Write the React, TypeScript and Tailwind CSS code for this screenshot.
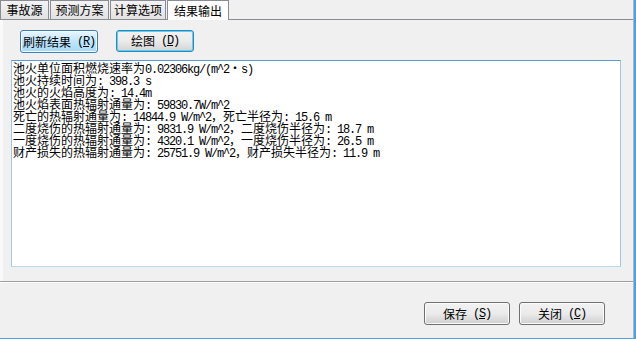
import React from "react";

const cjk = "font-['Noto_Sans_CJK_SC','Noto_Sans_CJK_JP',sans-serif]";
const ascii = "font-['Liberation_Mono','DejaVu_Sans_Mono',monospace] tracking-[-1.2px]";

const resultLines = [
  "池火单位面积燃烧速率为0.02306kg/(m^2·s)",
  "池火持续时间为: 398.3 s",
  "池火的火焰高度为: 14.4m",
  "池火焰表面热辐射通量为: 59830.7W/m^2",
  "死亡的热辐射通量为: 14844.9 W/m^2，死亡半径为: 15.6 m",
  "二度烧伤的热辐射通量为: 9831.9 W/m^2，二度烧伤半径为: 18.7 m",
  "一度烧伤的热辐射通量为: 4320.1 W/m^2，一度烧伤半径为: 26.5 m",
  "财产损失的热辐射通量为: 25751.9 W/m^2，财产损失半径为: 11.9 m",
];

// split a line into half-width and full-width runs (SimSun style: 6px / 12px cells)
function MixedText({ text }: { text: string }) {
  const runs = text.match(/[\x20-\x7e]+|[^\x20-\x7e]+/g) || [];
  return (
    <>
      {runs.map((r, i) =>
        /^[\x20-\x7e]/.test(r) ? (
          <span key={i} className={ascii}>{r}</span>
        ) : (
          <span key={i} className={cjk}>{r}</span>
        )
      )}
    </>
  );
}

function Tab({ label, width, active }: { label: string; width: string; active?: boolean }) {
  return (
    <div
      className={
        active
          ? `${width} h-[20px] bg-white border border-b-0 border-[#898c95] flex items-center justify-center text-[12px] leading-[12px] relative z-10`
          : `${width} h-[19px] bg-gradient-to-b from-[#f3f3f3] to-[#e2e2e2] border border-[#898c95] border-b-0 flex items-center justify-center text-[12px] leading-[12px]`
      }
    >
      <span className={cjk}>{label}</span>
    </div>
  );
}

function WinButton({
  label,
  hotkey,
  className,
  tone = "normal",
}: {
  label: string;
  hotkey: string;
  className: string;
  tone?: "normal" | "hover" | "focus";
}) {
  const skin =
    tone === "hover"
      ? "border-[#3c7fb1] bg-gradient-to-b from-[#eaf6fd] via-[#bee6fd] to-[#a7d9f5] shadow-[inset_0_0_0_1px_#f4fbff]"
      : tone === "focus"
      ? "border-[#3c7fb1] bg-gradient-to-b from-[#f2f2f2] via-[#ebebeb] to-[#d4d4d4] shadow-[inset_0_0_0_1px_#48d8fb]"
      : "border-[#707070] bg-gradient-to-b from-[#f2f2f2] via-[#ebebeb] to-[#cfcfcf] shadow-[inset_0_0_0_1px_#fcfcfc]";
  return (
    <button
      className={`${className} ${skin} border rounded-[3px] flex items-center justify-center text-[12px] leading-[12px] text-black`}
    >
      <span className={cjk}>{label}</span>
      <span className={`${ascii} whitespace-pre`}>
        {" ("}
        <span className="underline">{hotkey}</span>
        {")"}
      </span>
    </button>
  );
}

export default function App() {
  return (
    <div className="w-[636px] h-[339px] bg-[#f0f0f0] border-r-2 border-b border-[#4aa3df] text-black overflow-hidden">
      <div className="h-full border-r border-[#b4b4b4] flex flex-col">
        {/* Tab strip */}
        <div className="h-[20px] flex items-start gap-px border-b border-[#898c95]">
          <Tab label="事故源" width="w-[49px]" />
          <Tab label="预测方案" width="w-[59px]" />
          <Tab label="计算选项" width="w-[56px]" />
          <Tab label="结果输出" width="w-[62px]" active />
        </div>

        {/* Tab page */}
        <div className="h-[261px] border-l-[3px] border-[#fafafa] pt-[10px] pl-[8px]">
          <div className="flex gap-[18px] ml-[9px]">
            <WinButton label="刷新结果" hotkey="R" className="w-[78px] h-[23px]" tone="hover" />
            <WinButton label="绘图" hotkey="D" className="w-[78px] h-[22px]" tone="focus" />
          </div>
          <div className="mt-[7px] w-[610px] h-[207px] bg-white border border-t-[#5b9bd5] border-x-[#a4c9e3] border-b-[#b7d9ed] pl-[1px] pt-px">
            {resultLines.map((line, i) => (
              <div key={i} className="h-[12px] leading-[12px] text-[12px] whitespace-pre">
                <MixedText text={line} />
              </div>
            ))}
          </div>
        </div>

        {/* Divider */}
        <div className="h-[2px] border-t border-[#a0a0a0] bg-white" />

        {/* Footer buttons */}
        <div className="flex-1 flex justify-end items-start pt-[19px] pr-[28px] gap-[9px]">
          <WinButton label="保存" hotkey="S" className="w-[86px] h-[23px]" />
          <WinButton label="关闭" hotkey="C" className="w-[86px] h-[23px]" />
        </div>
      </div>
    </div>
  );
}
